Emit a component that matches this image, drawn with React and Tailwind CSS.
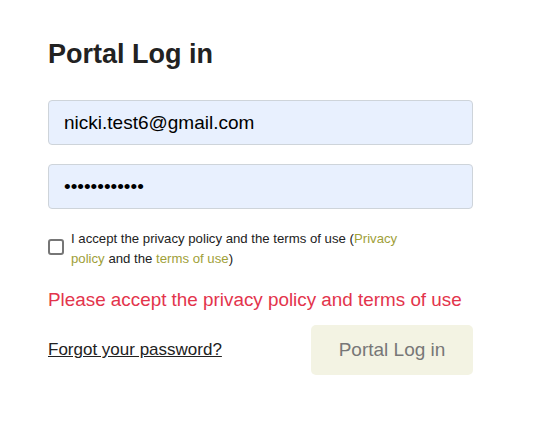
import React, { useState } from "react";

const App = () => {
  const [email, setEmail] = useState("nicki.test6@gmail.com");
  const [password, setPassword] = useState("abcdefghijkl");
  const [accepted, setAccepted] = useState(false);

  return (
    <div className="min-h-screen bg-white font-['Liberation_Sans',Arial,sans-serif] text-[#212529]">
      <div className="w-[425px] ml-[48px] pt-[37px]">
        <h1 className="text-[27px] font-bold leading-[34px] text-[#222]">Portal Log in</h1>

        <input
          type="email"
          value={email}
          onChange={(e) => setEmail(e.target.value)}
          className="mt-[29px] block w-full h-[45px] px-[15px] bg-[#e8f0fe] border border-[#ced4da] rounded-[4px] text-[19px] text-black outline-none"
        />
        <input
          type="password"
          value={password}
          onChange={(e) => setPassword(e.target.value)}
          className="mt-[19px] block w-full h-[45px] px-[15px] bg-[#e8f0fe] border border-[#ced4da] rounded-[4px] text-[19px] text-black outline-none"
        />

        <label className="mt-[20px] flex items-start gap-[7px]">
          <input
            type="checkbox"
            checked={accepted}
            onChange={(e) => setAccepted(e.target.checked)}
            className="mt-[10px] w-[16px] h-[16px] shrink-0 appearance-none border-2 border-[#767676] rounded-[3px] bg-white checked:bg-[#0075ff]"
          />
          <span className="w-[335px] text-[13.2px] leading-[20px] text-[#222]">
            I accept the privacy policy and the terms of use (
            <a href="#" className="text-[#a0a038]">Privacy policy</a> and the{" "}
            <a href="#" className="text-[#a0a038]">terms of use</a>)
          </span>
        </label>

        <p className="mt-[18px] text-[18.85px] leading-[26px] text-[#e3344c]">
          Please accept the privacy policy and terms of use
        </p>

        <div className="mt-[12px] flex items-center justify-between">
          <a href="#" className="text-[17px] underline text-[#222]">Forgot your password?</a>
          <button className="w-[162px] h-[50px] rounded-[5px] bg-[#f3f3e3] text-[19px] text-[#777]">
            Portal Log in
          </button>
        </div>
      </div>
    </div>
  );
};

export default App;
